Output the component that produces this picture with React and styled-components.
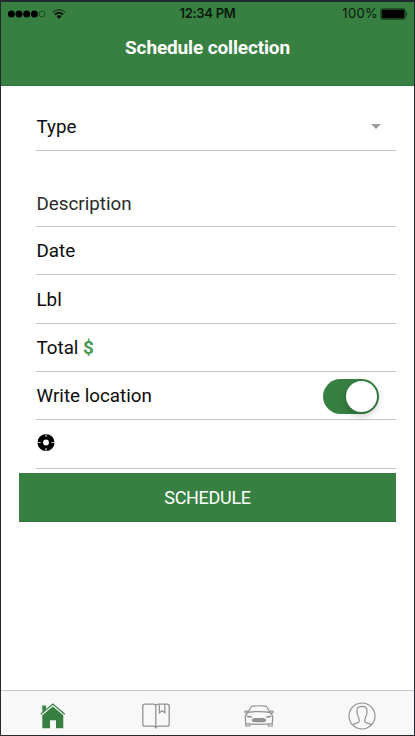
import React from 'react';
import styled, { createGlobalStyle } from 'styled-components';

const GlobalStyle = createGlobalStyle`
  *, *::before, *::after { box-sizing: border-box; }
  body { margin: 0; background: #23272f; }
  button { font: inherit; border: 0; padding: 0; background: none; }
`;

const Phone = styled.div`
  width: 415px;
  height: 736px;
  border: 1px solid #23272f;
  border-top-width: 2px;
  border-radius: 2px;
  background: #fff;
  display: flex;
  flex-direction: column;
  overflow: hidden;
  font-family: Roboto, sans-serif;
  color: #000;
`;

const Header = styled.header`
  height: 84px;
  flex: none;
  background: #388042;
  border-bottom: 1px solid #306e39;
`;

const StatusBar = styled.div`
  height: 23px;
  display: grid;
  grid-template-columns: 1fr auto 1fr;
  align-items: center;
  padding: 0 6px 0 6px;
  font: 500 13px/23px Inter, sans-serif;
  color: #0a190c;
`;

const StatusGroup = styled.div`
  display: flex;
  align-items: center;
  gap: ${(p) => p.$gap}px;
  justify-content: ${(p) => (p.$end ? 'flex-end' : 'flex-start')};
  font-weight: 400;
  letter-spacing: 0.3px;
`;

const Clock = styled.span`
  font-weight: 600;
  letter-spacing: -0.3px;
`;

const Title = styled.h1`
  margin: 9px 0 0;
  text-align: center;
  font-size: 19px;
  line-height: 28px;
  font-weight: 700;
  letter-spacing: -0.14px;
  color: #fff;
`;

const Form = styled.main`
  flex: 1;
  padding: 0 18px;
`;

const Row = styled.div`
  height: ${(p) => p.$height || 48}px;
  margin-left: 17px;
  padding: ${(p) => p.$top || 0}px 17px 0 0;
  border-bottom: 1px solid #c5c5c5;
  display: flex;
  align-items: center;
  justify-content: space-between;
`;

const Label = styled.span`
  padding-left: 0.5px;
  font-size: 18.8px;
  line-height: 24px;
  font-weight: 380;
  color: ${(p) => p.$color || '#0c0c0c'};
`;

const Dollar = styled.span`
  color: #43994f;
  font-weight: 700;
`;

const Caret = styled.span`
  border: 5.5px solid transparent;
  border-top: 5px solid #999;
  border-bottom: 0;
  margin: -1px -2px 0 0;
`;

const Toggle = styled.button`
  width: 56px;
  height: 35px;
  border-radius: 18px;
  background: #388042;
  padding: 2px;
  display: flex;
  justify-content: flex-end;
  margin-top: 1px;
`;

const Knob = styled.span`
  width: 31px;
  height: 31px;
  border-radius: 50%;
  background: #fff;
  box-shadow: 0 3px 8px rgba(0, 0, 0, 0.25);
`;

const Submit = styled.button`
  display: block;
  width: 377px;
  height: 49px;
  margin-top: 4px;
  background: #388042;
  border-bottom: 1px solid #32733b;
  color: #fff;
  font-size: 18px;
  letter-spacing: -0.3px;
  line-height: 49px;
  text-align: center;
`;

const TabBar = styled.nav`
  height: 45px;
  flex: none;
  background: #f8f8f8;
  border-top: 1px solid #c9c9c9;
  display: grid;
  grid-template-columns: repeat(4, 1fr);
`;

const Tab = styled.button`
  display: flex;
  align-items: center;
  justify-content: center;
  padding-top: 5px;
  color: ${(p) => (p.$active ? '#388042' : '#929292')};
`;

const SignalIcon = () => (
  <svg width="39" height="8" viewBox="0 0 39 8">
    {[4.4, 12, 19.7, 27.4].map((x) => (
      <circle key={x} cx={x} cy="4" r="3.5" fill="#000" />
    ))}
    <circle cx="35" cy="4" r="3" fill="none" stroke="#173b1b" strokeWidth="0.8" />
  </svg>
);

const WifiIcon = () => (
  <svg width="14" height="10" viewBox="0 0 14 10" fill="none">
    <path d="M.8 3.3Q7-2 13.2 3.3" stroke="#1b4320" strokeWidth="1.4" />
    <path d="M2.9 5.5Q7 2 11.1 5.5" stroke="#07140a" strokeWidth="1.7" />
    <path d="M4.6 7.3Q7 5.3 9.4 7.3L7 9.8Z" fill="#000" />
  </svg>
);

const BatteryIcon = () => (
  <svg width="28" height="12" viewBox="0 0 28 12">
    <rect x=".5" y=".5" width="25" height="11" rx="2" fill="none" stroke="#1b4320" strokeWidth=".8" />
    <rect x="1.5" y="1.5" width="23" height="9" rx="1" fill="#000" />
    <path d="M26.5 4Q28 6 26.5 8Z" fill="#000" />
  </svg>
);

const LocateSvg = styled.svg`
  margin-top: -3px;
`;

const LocateIcon = () => (
  <LocateSvg width="19" height="19" viewBox="0 0 19 19">
    <circle cx="10" cy="9.5" r="5.75" fill="none" stroke="#000" strokeWidth="5.6" />
    <path d="M.5 9.5h4.2M15.3 9.5h4" stroke="#d8d8d8" strokeWidth=".9" />
    <path d="M9.5 1v3M9.5 15v3" stroke="#c87c2c" strokeWidth=".8" />
    <path d="M10.5 1v3M10.5 15v3" stroke="#62a9cf" strokeWidth=".8" />
  </LocateSvg>
);

const HomeIcon = () => (
  <svg width="26" height="26" viewBox="0 0 26 26">
    <path d="M2.3 2.5H6V6L2.3 9.2Z" fill="currentColor" />
    <path d="M.7 11.2 12.8 1 24.8 11.2" fill="none" stroke="currentColor" strokeWidth="1.3" />
    <path d="M2.3 12.3 12.8 3.5 23.3 12.3V25.3H16V17.3H10V25.3H2.3Z" fill="currentColor" />
  </svg>
);

const BookIcon = () => (
  <svg width="28" height="26" viewBox="0 0 28 26" fill="none" stroke="currentColor" strokeWidth="1.3">
    <path d="M13.8 2.3C13.3 1.3 12.3 1.2 11 1.2H3Q.8 1.2.8 3.4V21Q.8 23.2 3 23.2H11C12.5 23.2 13.8 23.5 13.8 25.5C13.8 23.5 15.2 23.2 16.5 23.2H25Q27.2 23.2 27.2 21V3.4Q27.2 1.2 25 1.2H16.5C15.2 1.2 14.2 1.3 13.8 2.3V25" />
    <path d="M17.4 1.5V9.7L20.1 7.8 22.8 9.7V1.5" />
  </svg>
);

const CarIcon = () => (
  <svg width="30" height="22" viewBox="0 0 30 22" fill="none" stroke="currentColor" strokeWidth="1.2" strokeLinejoin="round">
    <path d="M4.2 7.3 6.7 2.4Q7.1 1.4 8.8 1.2Q15 .3 21.2 1.2Q22.9 1.4 23.3 2.4L25.8 7.3Q15 5.8 4.2 7.3Z" />
    <path d="M4.5 7 3.2 6.2H1.1Q.3 7.4 1.4 7.8L3.5 8M25.5 7 26.8 6.2H28.9Q29.7 7.4 28.6 7.8L26.5 8" />
    <path d="M4.2 7.3Q1.3 9.5 1.3 13L1.8 18.7Q15 20 28.2 18.7L28.7 13Q28.7 9.5 25.8 7.3" />
    <path d="M1.8 18.7V21H5.7V19.2M28.2 18.7V21H24.3V19.2" />
    <path d="M2.8 10.4Q7 10.4 9 12.3Q5.5 13.1 3.2 12ZM27.2 10.4Q23 10.4 21 12.3Q24.5 13.1 26.8 12Z" fill="currentColor" stroke="none" />
    <path d="M8.3 15.1Q9.2 13.5 11 13.5H19Q20.8 13.5 21.7 15.1Q20.8 16.7 19 16.7H11Q9.2 16.7 8.3 15.1Z" fill="currentColor" />
  </svg>
);

const PersonIcon = () => (
  <svg width="28" height="28" viewBox="0 0 28 28" fill="none" stroke="currentColor" strokeWidth="1.2">
    <circle cx="14" cy="14" r="13" />
    <path d="M4.7 23C6 21.5 8 21.3 10 20.6Q11.5 20 11.3 18.3C11.2 16.8 10.3 15.7 9.9 13.6Q8.7 12.2 9.1 10.7L9 8.4Q9 4.4 14 4.4T19 8.4L18.9 10.7Q19.3 12.2 18.1 13.6C17.7 15.7 16.8 16.8 16.7 18.3Q16.5 20 18 20.6C20 21.3 22 21.5 23.3 23" />
  </svg>
);

export default function App() {
  return (
    <>
      <GlobalStyle />
      <Phone>
        <Header>
          <StatusBar>
            <StatusGroup $gap={6}>
              <SignalIcon />
              <WifiIcon />
            </StatusGroup>
            <Clock>12:34 PM</Clock>
            <StatusGroup $gap={2} $end>
              <span>100%</span>
              <BatteryIcon />
            </StatusGroup>
          </StatusBar>
          <Title>Schedule collection</Title>
        </Header>
        <Form>
          <Row $height={65} $top={17}>
            <Label>Type</Label>
            <Caret />
          </Row>
          <Row $height={76} $top={31}>
            <Label $color="#2b2b2b">Description</Label>
          </Row>
          <Row><Label>Date</Label></Row>
          <Row $height={49} $top={1}><Label>Lbl</Label></Row>
          <Row><Label>Total <Dollar>$</Dollar></Label></Row>
          <Row>
            <Label>Write location</Label>
            <Toggle role="switch" aria-checked="true" aria-label="Write location">
              <Knob />
            </Toggle>
          </Row>
          <Row $height={49}><LocateIcon /></Row>
          <Submit>SCHEDULE</Submit>
        </Form>
        <TabBar>
          <Tab $active aria-label="Home"><HomeIcon /></Tab>
          <Tab aria-label="Catalog"><BookIcon /></Tab>
          <Tab aria-label="Car"><CarIcon /></Tab>
          <Tab aria-label="Profile"><PersonIcon /></Tab>
        </TabBar>
      </Phone>
    </>
  );
}
